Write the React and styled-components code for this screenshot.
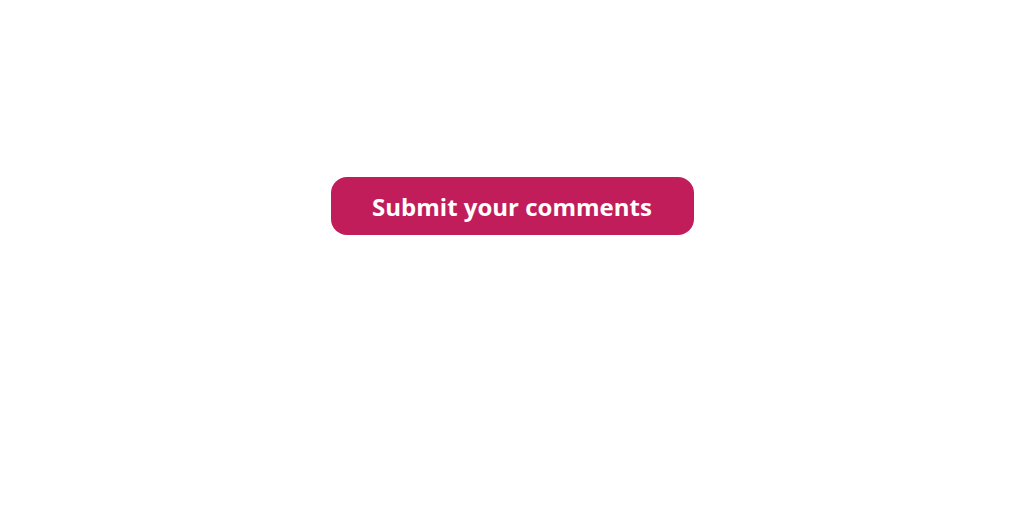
import styled, { createGlobalStyle } from 'styled-components';

const GlobalStyle = createGlobalStyle`
    html, body {
        margin: 0;
        padding: 0;
        background: #ffffff;
    }
`

const Page = styled.main`
    display: flex;
    justify-content: center;
    padding-top: 177px;
    width: 1024px;
    height: 512px;
    box-sizing: border-box;
`

const SubmitButton = styled.button`
    display: flex;
    align-items: center;
    justify-content: center;
    width: 363px;
    height: 58px;
    border: none;
    border-radius: 16px;
    background: #c21d5b;
    color: #ffffff;
    font-family: "Open Sans", "Noto Sans", sans-serif;
    font-size: 24px;
    font-weight: 700;
    cursor: pointer;
`

const App = () => {
    return (
        <>
            <GlobalStyle/>
            <Page>
                <SubmitButton type="button">Submit your comments</SubmitButton>
            </Page>
        </>
    )
}

export default App;
